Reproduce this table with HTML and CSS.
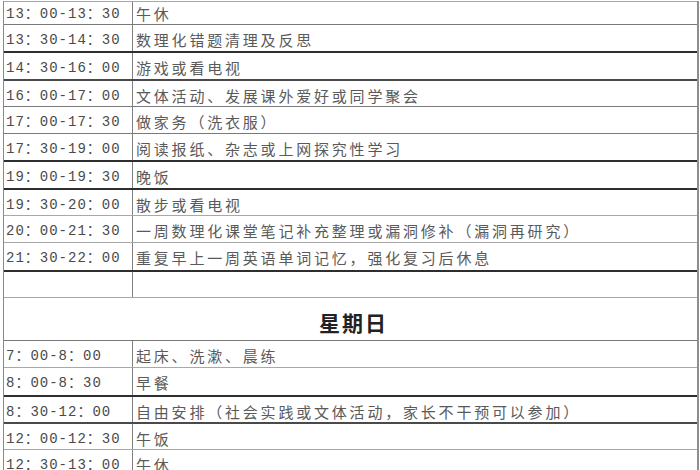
FILE: index.html
```html
<!DOCTYPE html>
<html lang="zh-CN">
<head>
<meta charset="utf-8">
<title>作息时间表</title>
<link rel="stylesheet" href="styles.css">
</head>
<body>
<div class="sheet">
  <div class="row first b-light"><div class="time">13：00-13：30</div><div class="task">午休</div></div>
  <div class="row b-mid"><div class="time">13：30-14：30</div><div class="task">数理化错题清理及反思</div></div>
  <div class="row b-thick"><div class="time">14：30-16：00</div><div class="task">游戏或看电视</div></div>
  <div class="row b-dark"><div class="time">16：00-17：00</div><div class="task">文体活动、发展课外爱好或同学聚会</div></div>
  <div class="row b-mid"><div class="time">17：00-17：30</div><div class="task">做家务（洗衣服）</div></div>
  <div class="row b-mid"><div class="time">17：30-19：00</div><div class="task">阅读报纸、杂志或上网探究性学习</div></div>
  <div class="row b-thick"><div class="time">19：00-19：30</div><div class="task">晚饭</div></div>
  <div class="row b-thick"><div class="time">19：30-20：00</div><div class="task">散步或看电视</div></div>
  <div class="row b-light"><div class="time">20：00-21：30</div><div class="task">一周数理化课堂笔记补充整理或漏洞修补（漏洞再研究）</div></div>
  <div class="row b-light"><div class="time">21：30-22：00</div><div class="task">重复早上一周英语单词记忆，强化复习后休息</div></div>
  <div class="row b-thick"><div class="time"></div><div class="task"></div></div>
  <div class="row day b-light"><div class="day-title">星期日</div></div>
  <div class="row b-mid"><div class="time">7：00-8：00</div><div class="task">起床、洗漱、晨练</div></div>
  <div class="row b-light"><div class="time">8：00-8：30</div><div class="task">早餐</div></div>
  <div class="row b-thick"><div class="time">8：30-12：00</div><div class="task">自由安排（社会实践或文体活动，家长不干预可以参加）</div></div>
  <div class="row b-dark"><div class="time">12：00-12：30</div><div class="task">午饭</div></div>
  <div class="row b-light"><div class="time">12：30-13：00</div><div class="task">午休</div></div>
</div>
</body>
</html>
```
FILE: styles.css
```css
html, body {
  margin: 0;
  padding: 0;
  background: #ffffff;
  overflow: hidden;
}

body {
  width: 700px;
  height: 470px;
  font-family: "Noto Sans CJK SC", "Noto Sans", sans-serif;
  color: #555555;
}

.sheet {
  margin: 1px 1px 0 3px;
  border-left: 1px solid #8a8a8a;
  border-right: 2px solid #8f8f8f;
}

.row {
  display: flex;
  box-sizing: border-box;
  height: 27.3px;
  border-top: 1px solid #9a9a9a;
}

.row.first {
  height: 23px;
}

.b-light { border-top: 1px solid #a8a8a8; }
.b-mid { border-top: 1px solid #7a7a7a; }
.b-dark { border-top: 2px solid #4a4a4a; }
.b-thick { border-top: 2px solid #2e2e2e; }

.time {
  width: 129px;
  flex: none;
  box-sizing: border-box;
  border-right: 1px solid #7f7f7f;
  padding: 5px 0 0 2px;
  font-family: "Liberation Mono", "Noto Sans CJK SC", monospace;
  font-size: 14px;
  letter-spacing: 1px;
  line-height: 20px;
  color: #4a4a4a;
  white-space: nowrap;
}

.task {
  flex: 1;
  padding: 5px 0 0 3px;
  font-size: 15px;
  letter-spacing: 2.8px;
  line-height: 20px;
  white-space: nowrap;
  color: #5a5a5a;
}

.row.first .time,
.row.first .task {
  padding-top: 2px;
}

.row.day {
  height: 43px;
  justify-content: center;
  align-items: center;
}

.day-title {
  padding: 7px 0 0 6px;
  font-size: 21px;
  font-weight: 700;
  letter-spacing: 2px;
  color: #222222;
}
```
